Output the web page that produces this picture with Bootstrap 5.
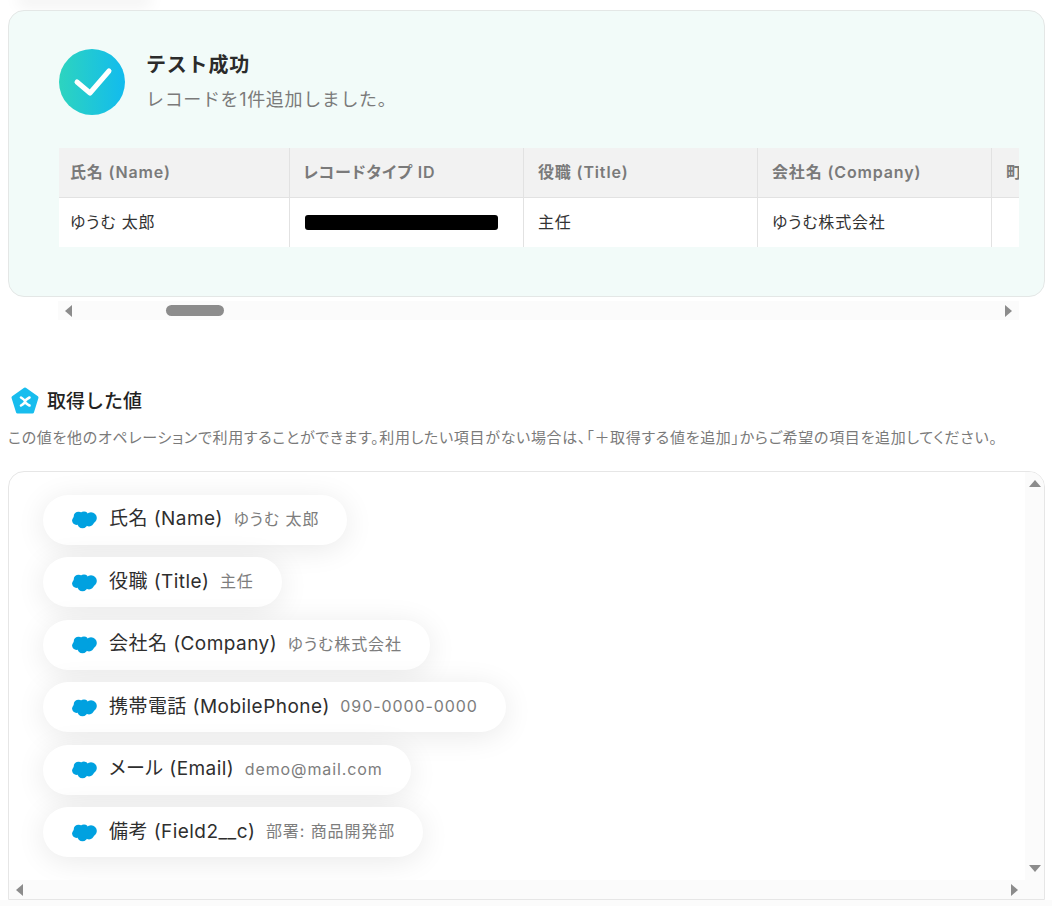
<!DOCTYPE html>
<html lang="ja">
<head>
<meta charset="UTF-8" />
<meta name="viewport" content="width=device-width, initial-scale=1.0" />
<title>テスト成功</title>
<link href="https://cdn.jsdelivr.net/npm/bootstrap@5.3.0/dist/css/bootstrap.min.css" rel="stylesheet" />
<style>
html, body { height: 906px; overflow: hidden; }
body { font-family: Inter, "Noto Sans CJK JP", sans-serif; color: #333; background: #fff; }

.top-shadow { width: 125px; height: 0; margin-left: 22px; box-shadow: 0 0 16px 4px rgba(0, 0, 0, .09); }

.result-card { margin: 10px 7px 0 8px; padding: 38px 25px 49px 50px; background: #f2fbf9; border: 1px solid #e4e7e6; border-radius: 16px; }
.check-circle { width: 66px; height: 66px; background: linear-gradient(90deg, #2dd4bf, #12bbee); }
.result-head { margin-bottom: 33px; gap: 21px; }
.result-title { font-size: 20px; line-height: 30px; font-weight: 700; letter-spacing: .8px; color: #2b2b2b; margin: 1px 0 7px; }
.result-sub { font-size: 18px; line-height: 26px; letter-spacing: .65px; color: #7a7a7a; margin: 0; }

.table-clip { overflow: hidden; }
.record-table { width: 1167px; table-layout: fixed; border-collapse: separate; border-spacing: 0; font-feature-settings: "palt"; }
.record-table th, .record-table td { padding: 0 14px 2px; font-size: 16px; white-space: nowrap; vertical-align: middle; border: 0; border-right: 1px solid #e2e2e2; }
.record-table th:first-child, .record-table td:first-child { padding-left: 11px; }
.record-table th:nth-child(2) { padding-left: 13px; }
.record-table th { height: 50px; background: #f2f2f2; color: #7a7a7a; font-weight: 600; letter-spacing: .85px; border-bottom: 1px solid #e2e2e2; }
.record-table td { height: 49px; background: #fff; color: #333; letter-spacing: .8px; }
.col-first { width: 231px; }
.col-rest { width: 234px; }
.redacted { width: 193px; height: 15px; margin: 2px 0 0 1px; background: #000; border-radius: 3px; }

.fake-hbar { height: 19px; background: #fbfbfb; }
.table-hbar { margin: 4px 33px 0 58px; padding: 0 7px; }
.hbar-thumb { width: 58px; height: 11px; margin-left: 94px; background: #8c8c8c; border-radius: 6px; }
.arrow-left { width: 0; height: 0; border: 6.5px solid transparent; border-left: 0; border-right: 7px solid #8c8c8c; }
.arrow-right { width: 0; height: 0; border: 6.5px solid transparent; border-right: 0; border-left: 7px solid #8c8c8c; }
.arrow-up { width: 0; height: 0; border: 6.5px solid transparent; border-top: 0; border-bottom: 7px solid #8c8c8c; }
.arrow-down { width: 0; height: 0; border: 6.5px solid transparent; border-bottom: 0; border-top: 7px solid #8c8c8c; }

.values-head { margin: 67px 0 0 11px; height: 27px; }
.values-title { font-size: 19px; line-height: 27px; padding-top: 2px; font-weight: 500; color: #222; margin: 0; }
.values-desc { margin: 15px 0 0 8px; font-size: 15px; line-height: 18px; letter-spacing: .7px; font-feature-settings: "palt"; color: #7a7a7a; white-space: nowrap; }

.values-box { margin: 24px 7px 0 8px; height: 429px; border: 1px solid #e6e6e6; border-radius: 16px 16px 0 0; overflow: hidden; }
.values-row { min-height: 0; }
.values-main { min-width: 0; }
.pill-list { padding: 22.5px 0 0 34px; gap: 12.5px; }
.value-pill { height: 50px; padding: 0 28px 0 29px; background: #fff; box-shadow: 0 4px 30px rgba(0, 0, 0, .09); font-feature-settings: "palt"; }
.value-pill svg { margin-right: 12px; }
.pill-name { font-size: 19px; letter-spacing: .45px; color: #2e2e2e; margin-right: 10.5px; }
.pill-val { font-size: 16px; color: #7d7d7d; letter-spacing: .9px; margin-bottom: 2px; }
.box-vbar { width: 19px; background: #fbfbfb; padding: 8px 0; }
.box-hbar { height: 19px; padding: 0 7px; background: #fbfbfb; }
.box-hbar .arrow-right { margin-right: 19px; }
.below-box { height: 10px; background: #fbfbfb; }
</style>
</head>
<body>
<div class="top-shadow"></div>

<div class="result-card">
	<div class="result-head d-flex align-items-start">
		<div class="check-circle rounded-circle d-flex align-items-center justify-content-center flex-shrink-0">
			<svg width="66" height="66" viewBox="0 0 66 66"><polyline points="18,33 31,44 50,22" fill="none" stroke="#fff" stroke-width="5" stroke-linecap="round" stroke-linejoin="round" /></svg>
		</div>
		<div>
			<p class="result-title">テスト成功</p>
			<p class="result-sub">レコードを1件追加しました。</p>
		</div>
	</div>
	<div class="table-clip">
		<table class="table record-table mb-0">
			<colgroup><col class="col-first" /><col class="col-rest" /><col class="col-rest" /><col class="col-rest" /><col class="col-rest" /></colgroup>
			<thead>
				<tr><th>氏名 (Name)</th><th>レコードタイプ ID</th><th>役職 (Title)</th><th>会社名 (Company)</th><th>町名</th></tr>
			</thead>
			<tbody>
				<tr><td>ゆうむ 太郎</td><td><div class="redacted"></div></td><td>主任</td><td>ゆうむ株式会社</td><td></td></tr>
			</tbody>
		</table>
	</div>
</div>
<div class="fake-hbar table-hbar d-flex align-items-center">
	<div class="arrow-left"></div>
	<div class="hbar-thumb"></div>
	<div class="arrow-right ms-auto"></div>
</div>

<div class="values-head d-flex align-items-center gap-2">
	<svg width="28" height="27" viewBox="0 0 28 27">
		<polygon points="14,2 26,10.5 21.5,25 6.5,25 2,10.5" fill="#18bdee" stroke="#18bdee" stroke-width="3" stroke-linejoin="round" />
		<path d="M10 10.5 Q14 13 14 14.5 Q14 16 10 18.5 M18.5 10.5 Q14 13 14 14.5 Q14 16 18.5 18.5" fill="none" stroke="#fff" stroke-width="2.6" stroke-linecap="round" />
	</svg>
	<p class="values-title">取得した値</p>
</div>
<p class="values-desc">この値を他のオペレーションで利用することができます。利用したい項目がない場合は、「＋取得する値を追加」からご希望の項目を追加してください。</p>

<div class="values-box d-flex flex-column">
	<div class="values-row d-flex flex-grow-1">
		<div class="values-main flex-grow-1">
			<div class="pill-list d-flex flex-column align-items-start" id="pills"></div>
		</div>
		<div class="box-vbar d-flex flex-column justify-content-between align-items-center">
			<div class="arrow-up"></div>
			<div class="arrow-down"></div>
		</div>
	</div>
	<div class="box-hbar d-flex align-items-center justify-content-between">
		<div class="arrow-left"></div>
		<div class="arrow-right"></div>
	</div>
</div>
<div class="below-box"></div>

<script>
	const values = [
		["氏名 (Name)", "ゆうむ 太郎"],
		["役職 (Title)", "主任"],
		["会社名 (Company)", "ゆうむ株式会社"],
		["携帯電話 (MobilePhone)", "090-0000-0000"],
		["メール (Email)", "demo@mail.com"],
		["備考 (Field2__c)", "部署: 商品開発部"]
	]
	const cloud = '<svg width="25" height="19" viewBox="0 0 25 19" fill="#00a1e0"><circle cx="6.5" cy="6.5" r="4.8"/><circle cx="12" cy="5.5" r="4"/><circle cx="19" cy="8" r="5.8"/><circle cx="4.5" cy="10.5" r="4.4"/><circle cx="10.5" cy="13" r="5.2"/><circle cx="17" cy="11.5" r="5"/><circle cx="11" cy="9" r="5.5"/></svg>'
	const list = document.getElementById("pills")
	values.forEach(([name, val]) => {
		const pill = document.createElement("div")
		pill.className = "value-pill rounded-pill d-flex align-items-center"
		pill.innerHTML = cloud + '<span class="pill-name"></span><span class="pill-val"></span>'
		pill.querySelector(".pill-name").textContent = name
		pill.querySelector(".pill-val").textContent = val
		list.appendChild(pill)
	})
</script>
<script src="https://cdn.jsdelivr.net/npm/bootstrap@5.3.0/dist/js/bootstrap.bundle.min.js"></script>
</body>
</html>
